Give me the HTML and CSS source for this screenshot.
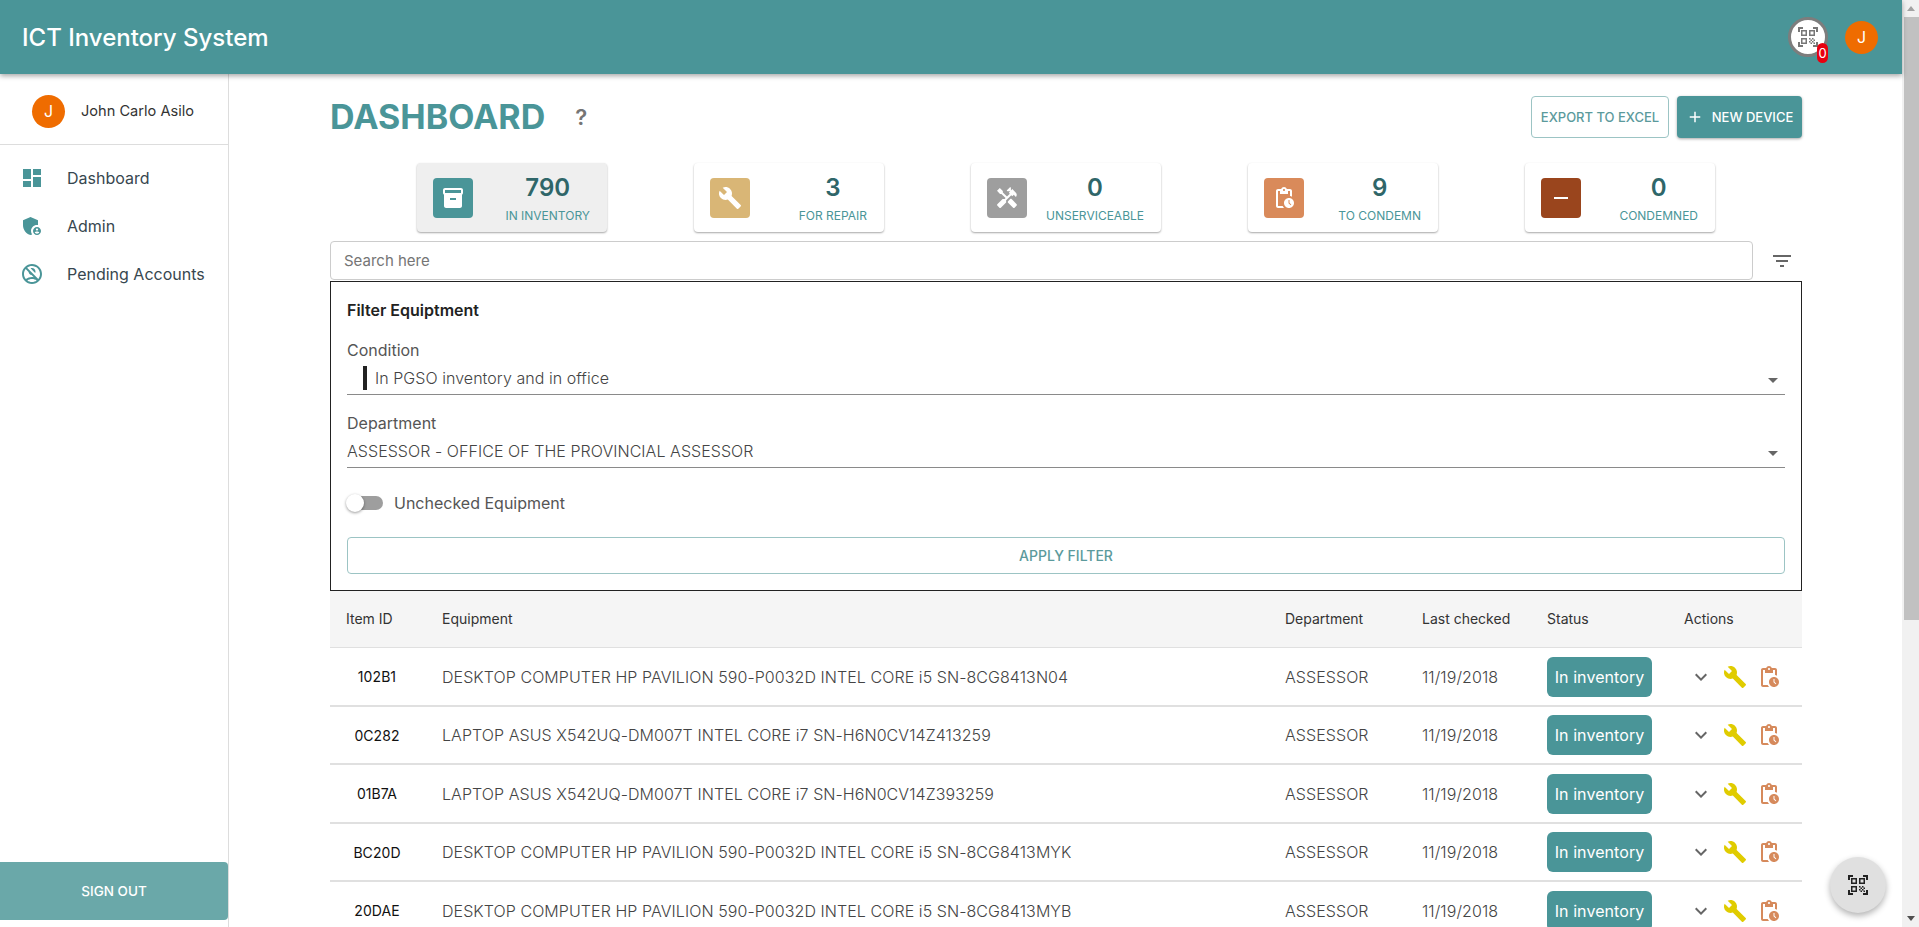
FILE: index.html

```html
<!DOCTYPE html>
<html>
<head>
  <title>ICT Inventory System</title>
  <link rel="stylesheet" href="styles.css">
</head>
<body>
  <svg class="sprite" width="0" height="0">
    <symbol id="i-dashboard" viewBox="0 0 24 24"><path d="M3 13h8V3H3v10zm0 8h8v-6H3v6zm10 0h8V11h-8v10zm0-18v6h8V3h-8z"/></symbol>
    <symbol id="i-admin" viewBox="0 0 24 24"><path d="M17 11c.34 0 .67.04 1 .09V6.27L10.5 3 3 6.27v4.91c0 4.54 3.2 8.79 7.5 9.82.55-.13 1.08-.32 1.6-.55-.69-.98-1.1-2.17-1.1-3.45 0-3.31 2.69-6 6-6z"/><path d="M17 13c-2.21 0-4 1.79-4 4s1.79 4 4 4 4-1.79 4-4-1.79-4-4-4zm0 1.38c.62 0 1.12.51 1.12 1.12s-.51 1.12-1.12 1.12-1.12-.51-1.12-1.12.5-1.12 1.12-1.12zm0 5.37c-.93 0-1.74-.46-2.24-1.17.05-.72 1.51-1.08 2.24-1.08s2.19.36 2.24 1.08c-.5.71-1.31 1.17-2.24 1.17z"/></symbol>
    <symbol id="i-pending" viewBox="0 0 24 24"><path d="M15.18 10.94c.2-.44.32-.92.32-1.44C15.5 7.57 13.93 6 12 6c-.52 0-1 .12-1.44.32l4.62 4.62z"/><path d="M12 2C6.48 2 2 6.48 2 12s4.48 10 10 10 10-4.48 10-10S17.52 2 12 2zM4 12c0-1.85.63-3.55 1.69-4.9l2.86 2.86c.21 1.56 1.43 2.79 2.99 2.99l2.2 2.2C13.17 15.05 12.59 15 12 15c-2.32 0-4.45.8-6.14 2.12C4.7 15.73 4 13.95 4 12zm8 8c-1.74 0-3.34-.56-4.65-1.5C8.66 17.56 10.26 17 12 17s3.34.56 4.65 1.5c-1.31.94-2.91 1.5-4.65 1.5zm6.31-3.1L7.1 5.69C8.45 4.63 10.15 4 12 4c4.42 0 8 3.58 8 8 0 1.85-.63 3.55-1.69 4.9z"/></symbol>
    <symbol id="i-box" viewBox="0 0 24 24"><path d="M20 2H4c-1 0-2 .9-2 2v3.01c0 .72.43 1.34 1 1.69V20c0 1.1 1.1 2 2 2h14c.9 0 2-.9 2-2V8.7c.57-.35 1-.97 1-1.69V4c0-1.1-1-2-2-2zm-5 12H9v-2h6v2zm5-7H4V4l16-.02V7z"/></symbol>
    <symbol id="i-wrench" viewBox="0 0 24 24"><path d="M22.7 19l-9.1-9.1c.9-2.3.4-5-1.5-6.9-2-2-5-2.4-7.4-1.3L9 6 6 9 1.6 4.7C.4 7.1.9 10.1 2.9 12.1c1.9 1.9 4.6 2.4 6.9 1.5l9.1 9.1c.4.4 1 .4 1.4 0l2.3-2.3c.5-.4.5-1.1.1-1.4z"/></symbol>
    <symbol id="i-tools" viewBox="0 0 24 24"><path d="M21.67 18.17l-5.3-5.3h-.99l-2.54 2.54v.99l5.3 5.3c.39.39 1.02.39 1.41 0l2.12-2.12c.39-.38.39-1.02 0-1.41z"/><path d="M17.34 10.19l1.41-1.41 2.12 2.12c1.17-1.17 1.17-3.07 0-4.24l-3.54-3.54-1.41 1.41V1.71l-.7-.71-3.54 3.54.71.71h2.83l-1.41 1.41 1.06 1.06-2.89 2.89-4.13-4.13V5.06L4.83 2.04 2 4.87 5.03 7.9h1.41l4.13 4.13-.85.85H7.6l-5.3 5.3c-.39.39-.39 1.02 0 1.41l2.12 2.12c.39.39 1.02.39 1.41 0l5.3-5.3v-2.12l5.15-5.15 1.06 1.05z"/></symbol>
    <symbol id="i-clip" viewBox="0 0 24 24"><path d="M17 12c-2.76 0-5 2.24-5 5s2.24 5 5 5 5-2.24 5-5-2.24-5-5-5zm1.65 7.35L16.5 17.2V14h1v2.79l1.85 1.85-.7.71zM18 3h-3.18C14.4 1.84 13.3 1 12 1s-2.4.84-2.82 2H6c-1.1 0-2 .9-2 2v15c0 1.1.9 2 2 2h6.11c-.59-.57-1.07-1.25-1.42-2H6V5h2v3h8V5h2v5.08c.71.1 1.38.31 2 .6V5c0-1.1-.9-2-2-2zm-6 2c-.55 0-1-.45-1-1s.45-1 1-1 1 .45 1 1-.45 1-1 1z"/></symbol>
    <symbol id="i-minus" viewBox="0 0 24 24"><path d="M19 13H5v-2h14v2z"/></symbol>
    <symbol id="i-plus" viewBox="0 0 24 24"><path d="M19 13h-6v6h-2v-6H5v-2h6V5h2v6h6v2z"/></symbol>
    <symbol id="i-filter" viewBox="0 0 24 24"><path d="M10 18h4v-2h-4v2zM3 6v2h18V6H3zm3 7h12v-2H6v2z"/></symbol>
    <symbol id="i-chevron" viewBox="0 0 24 24"><path d="M16.59 8.59 12 13.17 7.41 8.59 6 10l6 6 6-6z"/></symbol>
    <symbol id="i-qr" viewBox="0 0 24 24"><path d="M9.5 6.5v3h-3v-3h3M11 5H5v6h6V5zm-1.5 9.5v3h-3v-3h3M11 13H5v6h6v-6zm6.5-6.5v3h-3v-3h3M19 5h-6v6h6V5zm-6 8h1.5v1.5H13V13zm1.5 1.5H16V16h-1.5v-1.5zM16 13h1.5v1.5H16V13zm-3 3h1.5v1.5H13V16zm1.5 1.5H16V19h-1.5v-1.5zM16 16h1.5v1.5H16V16zm1.5-1.5H19V16h-1.5v-1.5zm0 3H19V19h-1.5v-1.5zM22 7h-2V4h-3V2h5v5zm0 15v-5h-2v3h-3v2h5zM2 22h5v-2H4v-3H2v5zM2 2v5h2V4h3V2H2z"/></symbol>
  </svg>

  <div class="page">
    <div class="viewport">
      <header class="topbar">
        <h1 class="brand">ICT Inventory System</h1>
        <div class="topbar-right">
          <div class="qr-button">
            <svg class="qr-icon"><use href="#i-qr"/></svg>
            <span class="qr-badge">0</span>
          </div>
          <div class="avatar">J</div>
        </div>
      </header>

      <div class="layout">
        <aside class="sidebar">
          <div class="user-row">
            <div class="avatar">J</div>
            <span class="user-name">John Carlo Asilo</span>
          </div>
          <nav class="nav">
            <a class="nav-item"><svg class="nav-icon"><use href="#i-dashboard"/></svg>Dashboard</a>
            <a class="nav-item"><svg class="nav-icon"><use href="#i-admin"/></svg>Admin</a>
            <a class="nav-item"><svg class="nav-icon"><use href="#i-pending"/></svg>Pending Accounts</a>
          </nav>
          <button class="sign-out">SIGN OUT</button>
        </aside>

        <main class="content">
          <div class="title-row">
            <h2 class="page-title">DASHBOARD</h2>
            <span class="help">?</span>
            <div class="title-actions">
              <button class="btn-outline">EXPORT TO EXCEL</button>
              <button class="btn-solid"><svg class="plus-icon"><use href="#i-plus"/></svg>NEW DEVICE</button>
            </div>
          </div>

          <div class="stats">
            <div class="stat-card active">
              <div class="stat-icon teal"><svg><use href="#i-box"/></svg></div>
              <div class="stat-text"><div class="stat-num">790</div><div class="stat-label">IN INVENTORY</div></div>
            </div>
            <div class="stat-card">
              <div class="stat-icon sand"><svg><use href="#i-wrench"/></svg></div>
              <div class="stat-text"><div class="stat-num">3</div><div class="stat-label">FOR REPAIR</div></div>
            </div>
            <div class="stat-card">
              <div class="stat-icon grey"><svg><use href="#i-tools"/></svg></div>
              <div class="stat-text"><div class="stat-num">0</div><div class="stat-label">UNSERVICEABLE</div></div>
            </div>
            <div class="stat-card">
              <div class="stat-icon orange"><svg><use href="#i-clip"/></svg></div>
              <div class="stat-text"><div class="stat-num">9</div><div class="stat-label">TO CONDEMN</div></div>
            </div>
            <div class="stat-card">
              <div class="stat-icon brown"><svg><use href="#i-minus"/></svg></div>
              <div class="stat-text"><div class="stat-num">0</div><div class="stat-label">CONDEMNED</div></div>
            </div>
          </div>

          <div class="search-row">
            <div class="search-box">Search here</div>
            <svg class="filter-icon"><use href="#i-filter"/></svg>
          </div>

          <section class="filter-panel">
            <h3 class="filter-title">Filter Equiptment</h3>
            <div class="field">
              <label class="field-label">Condition</label>
              <div class="select">
                <span class="select-mark"></span>
                <span class="select-value">In PGSO inventory and in office</span>
                <span class="select-arrow"></span>
              </div>
            </div>
            <div class="field">
              <label class="field-label">Department</label>
              <div class="select">
                <span class="select-value">ASSESSOR - OFFICE OF THE PROVINCIAL ASSESSOR</span>
                <span class="select-arrow"></span>
              </div>
            </div>
            <div class="switch-row">
              <span class="switch"><span class="switch-thumb"></span></span>
              <span class="switch-label">Unchecked Equipment</span>
            </div>
            <button class="apply-btn">APPLY FILTER</button>
          </section>

          <table class="grid">
            <thead>
              <tr>
                <th class="col-id">Item ID</th>
                <th class="col-eq">Equipment</th>
                <th class="col-dept">Department</th>
                <th class="col-date">Last checked</th>
                <th class="col-status">Status</th>
                <th class="col-actions">Actions</th>
              </tr>
            </thead>
            <tbody>
              <tr>
                <td class="item-id">102B1</td>
                <td>DESKTOP COMPUTER HP PAVILION 590-P0032D INTEL CORE i5 SN-8CG8413N04</td>
                <td>ASSESSOR</td>
                <td>11/19/2018</td>
                <td><span class="status">In inventory</span></td>
                <td><div class="actions"><svg class="a-chevron"><use href="#i-chevron"/></svg><svg class="a-wrench"><use href="#i-wrench"/></svg><svg class="a-clip"><use href="#i-clip"/></svg></div></td>
              </tr>
              <tr>
                <td class="item-id">0C282</td>
                <td>LAPTOP ASUS X542UQ-DM007T INTEL CORE i7 SN-H6N0CV14Z413259</td>
                <td>ASSESSOR</td>
                <td>11/19/2018</td>
                <td><span class="status">In inventory</span></td>
                <td><div class="actions"><svg class="a-chevron"><use href="#i-chevron"/></svg><svg class="a-wrench"><use href="#i-wrench"/></svg><svg class="a-clip"><use href="#i-clip"/></svg></div></td>
              </tr>
              <tr>
                <td class="item-id">01B7A</td>
                <td>LAPTOP ASUS X542UQ-DM007T INTEL CORE i7 SN-H6N0CV14Z393259</td>
                <td>ASSESSOR</td>
                <td>11/19/2018</td>
                <td><span class="status">In inventory</span></td>
                <td><div class="actions"><svg class="a-chevron"><use href="#i-chevron"/></svg><svg class="a-wrench"><use href="#i-wrench"/></svg><svg class="a-clip"><use href="#i-clip"/></svg></div></td>
              </tr>
              <tr>
                <td class="item-id">BC20D</td>
                <td>DESKTOP COMPUTER HP PAVILION 590-P0032D INTEL CORE i5 SN-8CG8413MYK</td>
                <td>ASSESSOR</td>
                <td>11/19/2018</td>
                <td><span class="status">In inventory</span></td>
                <td><div class="actions"><svg class="a-chevron"><use href="#i-chevron"/></svg><svg class="a-wrench"><use href="#i-wrench"/></svg><svg class="a-clip"><use href="#i-clip"/></svg></div></td>
              </tr>
              <tr>
                <td class="item-id">20DAE</td>
                <td>DESKTOP COMPUTER HP PAVILION 590-P0032D INTEL CORE i5 SN-8CG8413MYB</td>
                <td>ASSESSOR</td>
                <td>11/19/2018</td>
                <td><span class="status">In inventory</span></td>
                <td><div class="actions"><svg class="a-chevron"><use href="#i-chevron"/></svg><svg class="a-wrench"><use href="#i-wrench"/></svg><svg class="a-clip"><use href="#i-clip"/></svg></div></td>
              </tr>
            </tbody>
          </table>
        </main>
      </div>
    </div>

    <div class="scrollbar">
      <span class="sb-arrow up"></span>
      <div class="sb-track"><div class="sb-thumb"></div></div>
      <span class="sb-arrow down"></span>
    </div>
  </div>

  <div class="fab"><svg><use href="#i-qr"/></svg></div>
</body>
</html>
```

FILE: styles.css

```css
* {
  box-sizing: border-box;
  margin: 0;
  padding: 0;
}

body {
  font-family: Inter, "Noto Sans", sans-serif;
  color: #333;
  background-color: #fff;
  overflow: hidden;
}

.sprite {
  display: block;
}

.page {
  display: flex;
  height: 100vh;
  overflow: hidden;
}

.viewport {
  flex: 1;
  min-width: 0;
  display: flex;
  flex-direction: column;
}

/* top bar */
.topbar {
  height: 74px;
  flex-shrink: 0;
  background-color: #4a9598;
  box-shadow: 0 2px 5px rgba(0, 0, 0, 0.35);
  display: flex;
  align-items: center;
  justify-content: space-between;
  padding: 0 24px 0 22px;
  position: relative;
  z-index: 2;
}

.brand {
  font-size: 24px;
  font-weight: 500;
  color: #fff;
}

.topbar-right {
  display: flex;
  align-items: center;
  gap: 17px;
}

.avatar {
  width: 33px;
  height: 33px;
  border-radius: 50%;
  background-color: #ef6c00;
  color: #fff;
  font-size: 16px;
  display: flex;
  align-items: center;
  justify-content: center;
}

.qr-button {
  width: 40px;
  height: 40px;
  border-radius: 50%;
  background-color: #fff;
  border: 3px solid #7d7d7d;
  display: flex;
  align-items: center;
  justify-content: center;
  position: relative;
}

.qr-icon {
  width: 24px;
  height: 24px;
  fill: #777;
}

.qr-badge {
  position: absolute;
  left: 26px;
  top: 23px;
  width: 11px;
  height: 20px;
  border-radius: 6px;
  background-color: #e8000f;
  color: #fff;
  font-size: 13px;
  line-height: 20px;
  text-align: center;
}

/* sidebar */
.layout {
  flex: 1;
  min-height: 0;
  display: flex;
}

.sidebar {
  width: 229px;
  flex-shrink: 0;
  border-right: 1px solid #ddd;
  display: flex;
  flex-direction: column;
}

.user-row {
  height: 71px;
  display: flex;
  align-items: center;
  gap: 16px;
  padding: 4px 0 0 32px;
  border-bottom: 1px solid #ddd;
}

.user-name {
  font-size: 14.6px;
  color: #333;
}

.nav {
  padding-top: 9px;
}

.nav-item {
  height: 48px;
  display: flex;
  align-items: center;
  padding-left: 20px;
  font-size: 16px;
  color: #37474f;
}

.nav-icon {
  width: 24px;
  height: 24px;
  margin-right: 23px;
  fill: #4a9598;
}

.sign-out {
  margin-top: auto;
  margin-bottom: 7px;
  width: 228px;
  height: 58px;
  border: none;
  border-radius: 0 4px 4px 0;
  background-color: #6aa8a9;
  color: #fff;
  font-family: inherit;
  font-size: 13.5px;
  font-weight: 500;
}

/* main */
.content {
  flex: 1;
  min-width: 0;
  overflow: hidden;
  padding: 0 100px 0 101px;
}

.title-row {
  display: flex;
  align-items: center;
  height: 89px;
  padding-bottom: 4px;
}

.page-title {
  font-size: 34px;
  font-weight: 700;
  color: #4a9598;
}

.help {
  margin-left: 30px;
  font-size: 22px;
  font-weight: 600;
  color: #757575;
}

.title-actions {
  margin-left: auto;
  display: flex;
  gap: 8px;
}

.btn-outline,
.btn-solid {
  height: 42px;
  border-radius: 4px;
  font-family: inherit;
  font-size: 13px;
  font-weight: 500;
  display: flex;
  align-items: center;
}

.btn-outline {
  width: 138px;
  justify-content: center;
  background-color: #fff;
  border: 1px solid #9cc4c4;
  color: #5b9a9c;
}

.btn-solid {
  width: 125px;
  justify-content: center;
  background-color: #4a9598;
  border: none;
  color: #fff;
  box-shadow: 0 1px 3px rgba(0, 0, 0, 0.35);
}

.plus-icon {
  width: 18px;
  height: 18px;
  margin-right: 8px;
  fill: #fff;
}

.stats {
  display: flex;
  justify-content: space-evenly;
}

.stat-card {
  width: 190px;
  height: 69px;
  padding: 15px 17px 0 16px;
  background-color: #fff;
  border-radius: 4px;
  box-shadow: 0 1px 2px rgba(0, 0, 0, 0.35);
  display: flex;
  justify-content: space-between;
}

.stat-card.active {
  background-color: #efefef;
}

.stat-icon {
  width: 40px;
  height: 40px;
  border-radius: 4px;
  display: flex;
  align-items: center;
  justify-content: center;
}

.stat-icon svg {
  width: 24px;
  height: 24px;
  fill: #fff;
}

.stat-icon.teal { background-color: #4a9598; }
.stat-icon.sand { background-color: #d9b676; }
.stat-icon.grey { background-color: #9e9e9e; }
.stat-icon.orange { background-color: #d98a5a; }
.stat-icon.brown { background-color: #9a451d; }

.stat-text {
  margin-top: -2px;
  text-align: center;
}

.stat-num {
  font-size: 24px;
  font-weight: 600;
  line-height: 24px;
  color: #2f6669;
}

.stat-label {
  margin-top: 8px;
  font-size: 12px;
  line-height: 16px;
  color: #4a9598;
}

.search-row {
  display: flex;
  align-items: center;
  margin-top: 9px;
}

.search-box {
  flex: 1;
  height: 39px;
  padding-left: 13px;
  border: 1px solid #ccc;
  border-radius: 4px;
  font-size: 15px;
  line-height: 37px;
  color: #757575;
}

.filter-icon {
  width: 24px;
  height: 24px;
  margin: 0 8px 0 17px;
  fill: #666;
}

.filter-panel {
  margin-top: 1px;
  height: 310px;
  padding: 18px 16px 0;
  border: 1.5px solid #222;
}

.filter-title {
  font-size: 16px;
  font-weight: 600;
  line-height: 20px;
  color: #222;
}

.field {
  margin-top: 20px;
}

.field + .field {
  margin-top: 18px;
}

.field-label {
  display: block;
  margin-bottom: 1px;
  font-size: 16px;
  line-height: 20px;
  color: #555;
}

.select {
  height: 34px;
  border-bottom: 1px solid #8a8a8a;
  display: flex;
  align-items: center;
  position: relative;
}

.select-mark {
  width: 4px;
  height: 24px;
  margin: 0 8px 0 16px;
  background-color: #222;
}

.select-value {
  font-size: 16px;
  font-weight: 300;
  letter-spacing: 0.05px;
  color: #444;
}

.select-arrow {
  position: absolute;
  right: 7px;
  top: 17px;
  border-left: 5px solid transparent;
  border-right: 5px solid transparent;
  border-top: 5px solid #666;
}

.switch-row {
  display: flex;
  align-items: center;
  height: 24px;
  margin-top: 23px;
}

.switch {
  width: 36px;
  height: 14px;
  border-radius: 7px;
  background: linear-gradient(to right, transparent 14px, #9e9e9e 14px);
  position: relative;
}

.switch-thumb {
  position: absolute;
  left: -1px;
  top: -2px;
  width: 18px;
  height: 18px;
  border-radius: 50%;
  background-color: #fff;
  box-shadow: 0 1px 3px rgba(0, 0, 0, 0.4);
}

.switch-label {
  margin-left: 11px;
  font-size: 16px;
  color: #555;
}

.apply-btn {
  display: block;
  width: 100%;
  height: 37px;
  margin-top: 22px;
  background-color: #fff;
  border: 1px solid #9cc4c4;
  border-radius: 4px;
  font-family: inherit;
  font-size: 14px;
  font-weight: 500;
  color: #5b9a9c;
}

/* table */
.grid {
  width: 100%;
  border-collapse: collapse;
  table-layout: fixed;
}

.grid th {
  height: 56px;
  background-color: #f5f5f5;
  border-bottom: 1px solid #e0e0e0;
  font-weight: 400;
  font-size: 14px;
  text-align: left;
  color: #333;
}

.col-id { width: 112px; padding-left: 16px; }
.col-eq { width: 843px; }
.col-dept { width: 137px; }
.col-date { width: 125px; }
.col-status { width: 137px; }

.grid td {
  height: 58.5px;
  padding-top: 1px;
  border-bottom: 2px solid #e0e0e0;
  color: #444;
  font-size: 16px;
  font-weight: 300;
  letter-spacing: 0.07px;
}

.grid td.item-id {
  padding-right: 18px;
  text-align: center;
  font-size: 14px;
  font-weight: 400;
  color: #111;
}

.status {
  display: inline-flex;
  align-items: center;
  justify-content: center;
  width: 105px;
  height: 40px;
  border-radius: 6px;
  background-color: #4a9598;
  color: #fff;
  font-size: 16px;
  font-weight: 400;
}

.actions {
  display: flex;
  align-items: center;
  padding-left: 5px;
}

.actions svg {
  width: 24px;
  height: 24px;
  flex-shrink: 0;
}

.a-chevron { fill: #666; }

.a-wrench {
  margin-left: 10px;
  fill: #e0cc00;
}

.a-clip {
  margin-left: 10px;
  fill: #d68a5c;
}

/* scrollbar */
.scrollbar {
  width: 17px;
  flex-shrink: 0;
  background-color: #f1f1f1;
  display: flex;
  flex-direction: column;
  align-items: center;
}

.sb-arrow {
  width: 0;
  height: 0;
  margin: 6px 0;
  border-left: 4px solid transparent;
  border-right: 4px solid transparent;
}

.sb-arrow.up { border-bottom: 5px solid #a3a3a3; }
.sb-arrow.down { border-top: 5px solid #505050; }

.sb-track {
  flex: 1;
  width: 100%;
}

.sb-thumb {
  height: 603px;
  margin-left: 2px;
  background-color: #c1c1c1;
}

.fab {
  position: fixed;
  left: 1830px;
  top: 857px;
  width: 56px;
  height: 56px;
  border-radius: 50%;
  background-color: #e0e0e0;
  box-shadow: 0 3px 6px rgba(0, 0, 0, 0.3);
  display: flex;
  align-items: center;
  justify-content: center;
}

.fab svg {
  width: 24px;
  height: 24px;
  fill: #222;
}
```
